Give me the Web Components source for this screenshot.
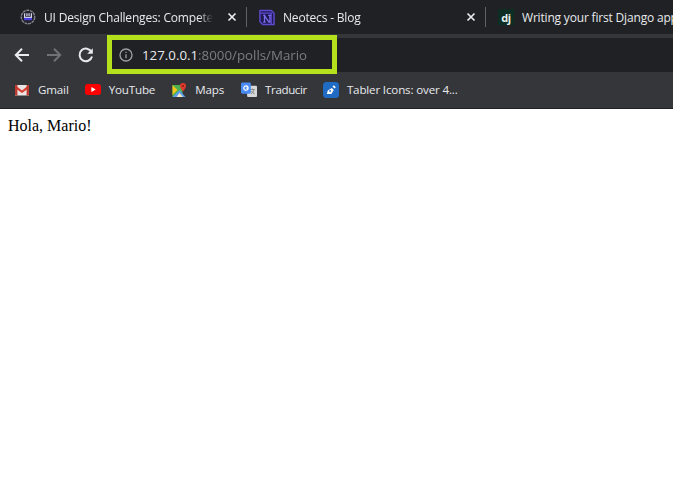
<!DOCTYPE html>
<html lang="es"><head><meta charset="utf-8"><title>127.0.0.1:8000/polls/Mario</title>
<style>
html,body{margin:0;padding:0;background:#fff;height:100%;overflow:hidden}
body{display:flex;flex-direction:column}
</style></head><body>
<tab-strip>
  <browser-tab label="UI Design Challenges: Compete" closable>
    <svg slot="icon" width="18" height="18" viewBox="0 0 18 18"><circle cx="9" cy="9" r="7.600" fill="#23242e" stroke="#85868e" stroke-width="1.500" stroke-dasharray="3.400 .8"/><path d="M5.200 4.800v4.700h7.600V4.800M7.800 4.800v3M10.200 4.800v3" fill="none" stroke="#dcdcf4" stroke-width="1.300"/><rect x="4.600" y="10" width="8.800" height="2.600" fill="#4a3fe0"/></svg>
  </browser-tab>
  <browser-tab label="Neotecs - Blog" closable>
    <svg slot="icon" width="17" height="17" viewBox="0 0 17 17"><path d="M1 1h12l3 3v12H4l-3-3z" fill="#1d1a52" stroke="#5f49d0" stroke-width="1.500" stroke-linejoin="round"/><path d="M1.500 3.800h11.500V16" fill="none" stroke="#5f49d0" stroke-width="1.300"/><path d="M5.800 13.500V6.500l4.800 7h1V6M4.500 6.200h2.200M9.800 6.200h2.900M4.500 13.500h2.600" fill="none" stroke="#7f70f2" stroke-width="1.300"/></svg>
  </browser-tab>
  <browser-tab label="Writing your first Django app" last>
    <span slot="icon" style="display:flex;align-items:center;justify-content:center;width:16px;height:16px;background:#0c2e23;color:#e6f0ec;font:700 11px 'Open Sans',sans-serif;letter-spacing:-.3px">dj</span>
  </browser-tab>
</tab-strip>
<nav-bar url-host="127.0.0.1" url-rest=":8000/polls/Mario"></nav-bar>
<bookmark-bar>
  <book-mark label="Gmail"><svg slot="icon" width="16" height="16" viewBox="0 0 16 16"><path d="M1 3h14v10.500H1z" fill="#e8e4e1"/><path d="M1 3l7 5.500L15 3v3L8 11 1 6z" fill="#d93b30"/><path d="M1 3h2.400v10.500H1.600L1 13zM15 3h-2.400v10.500h1.800l.6-.5z" fill="#bd3a30"/></svg></book-mark>
  <book-mark label="YouTube"><svg slot="icon" width="16" height="16" viewBox="0 0 16 16"><rect x="0" y="2" width="16" height="11" rx="3" fill="#f00"/><path d="M6.400 5v5l4.300-2.500z" fill="#fff"/></svg></book-mark>
  <book-mark label="Maps"><svg slot="icon" width="16" height="16" viewBox="0 0 16 16"><path d="M1.500 3h10v12h-10z" fill="#4caf50"/><path d="M1.500 15l7-7 6 7z" fill="#5c9ce6"/><path d="M1.500 3l5 5-5 5z" fill="#f5c518"/><path d="M5.500 15l3-4 3.500 4z" fill="#f5e9c9"/><path d="M12 1a3 3 0 0 0-3 3C9 6 12 9.500 12 9.500S15 6 15 4a3 3 0 0 0-3-3z" fill="#e0392d"/><circle cx="12" cy="4" r="1.100" fill="#8c1d15"/></svg></book-mark>
  <book-mark label="Traducir" style="margin-left:1px;letter-spacing:-.4px"><svg slot="icon" width="16" height="16" viewBox="0 0 17 16"><rect x="6.500" y="3.500" width="10.500" height="12" rx="1" fill="#d8d8d8"/><path d="M10 7.500h4.500M12.200 6.500v1M10.500 12c2-1 3-2.500 3.500-4.500M11 9c.8 1.500 2 2.500 3.500 3" fill="none" stroke="#7a7a7a" stroke-width=".9"/><rect x="0" y="0" width="10.500" height="12" rx="1.500" fill="#4a8af4"/><circle cx="5.200" cy="6" r="2.300" fill="none" stroke="#fff" stroke-width="1.300"/><path d="M5.500 6h2.200" stroke="#fff" stroke-width="1.100"/></svg></book-mark>
  <book-mark label="Tabler Icons: over 4..."><svg slot="icon" width="16" height="16" viewBox="0 0 16 16"><rect width="16" height="16" rx="3.500" fill="#206bc4"/><path d="M3.800 12l1-3.600 4-2.300 1.900 1.900-2.300 4z" fill="#fff"/><path d="M9.500 4.600l2 2L12.800 5.200 10.900 3.200z" fill="#fff"/><circle cx="7.100" cy="9" r=".9" fill="#206bc4"/></svg></book-mark>
</bookmark-bar>
<page-view>Hola, Mario!</page-view>
<script>
const def=(name,html,init)=>customElements.define(name,class extends HTMLElement{
  connectedCallback(){ if(this.shadowRoot)return; const r=this.attachShadow({mode:'open'}); r.innerHTML=html; if(init)init(this,r); }
});
const UI="'Open Sans','Noto Sans',sans-serif";
def('tab-strip',`<style>:host{display:flex;flex:none;height:34px;background:#202124;padding-left:8px;overflow:hidden}</style><slot></slot>`);
def('browser-tab',`<style>
:host{display:flex;flex:none;width:239px;height:34px;align-items:center;box-sizing:border-box;padding:0 0 0 12px;position:relative;color:#e8eaed;font:12px ${UI}}
.ic{width:16px;height:16px;flex:none;display:flex;align-items:center;justify-content:center}
.t{margin-left:8px;flex:1;min-width:0;white-space:nowrap;overflow:hidden;letter-spacing:-.18px}
:host([closable]) .t{-webkit-mask-image:linear-gradient(90deg,#000 calc(100% - 14px),transparent)}
.x{width:10px;height:10px;flex:none;margin:0 9px 0 14px;display:none}
:host([closable]) .x{display:block}
.sep{width:1px;height:20px;background:#5f6368;flex:none;display:none}
:host([closable]) .sep{display:block}
</style><span class="ic"><slot name="icon"></slot></span><span class="t"></span>
<svg class="x" viewBox="0 0 10 10"><path d="M1.500 1.500l7 7M8.500 1.500l-7 7" stroke="#e8eaed" stroke-width="1.700"/></svg><span class="sep"></span>`,
(h,r)=>{r.querySelector('.t').textContent=h.getAttribute('label')});
def('nav-bar',`<style>
:host{display:flex;flex:none;height:38px;background:#35363a;align-items:flex-start;position:relative;z-index:1}
.btns{flex:none;width:107px;height:38px;display:flex;align-items:center;padding:3px 0 0 12px;box-sizing:border-box;gap:12px}
svg.n{flex:none;display:block}
.omni{flex:1;height:34px;margin-top:4px;background:#202124;display:flex;align-items:center;position:relative;font:13.300px ${UI}}
.i{margin-left:12px;flex:none}
.u{margin-left:9px;color:#e8eaed;white-space:nowrap}
.u span{color:#9aa0a6;opacity:.72}
.mark{position:absolute;left:0;top:-3px;width:230px;height:39px;box-sizing:border-box;border:5px solid #b5e01c;pointer-events:none}
</style>
<div class="btns">
<svg class="n" width="20" height="20" viewBox="0 0 20 20"><path d="M17 10H4.500M10 3.800L3.800 10l6.200 6.200" fill="none" stroke="#e8eaed" stroke-width="2"/></svg>
<svg class="n" width="20" height="20" viewBox="0 0 20 20"><path d="M3 10h12.500M10 3.800l6.200 6.200-6.200 6.200" fill="none" stroke="#6f7276" stroke-width="2"/></svg>
<svg class="n" width="20" height="20" viewBox="0 0 20 20"><path d="M15.500 7A6.300 6.300 0 1 0 16 11.500" fill="none" stroke="#e8eaed" stroke-width="2"/><path d="M16.800 3.200v5.600h-5.600z" fill="#e8eaed"/></svg>
</div>
<div class="omni">
<svg class="i" width="14" height="14" viewBox="0 0 14 14"><circle cx="7" cy="7" r="6" fill="none" stroke="#9aa0a6" stroke-width="1.300"/><path d="M7 6.200v4M7 3.800v1.300" stroke="#9aa0a6" stroke-width="1.300"/></svg>
<span class="u"><b style="font-weight:400"></b><span></span></span>
<div class="mark"></div>
</div>`,(h,r)=>{r.querySelector('b').textContent=h.getAttribute('url-host');r.querySelector('.u span').textContent=h.getAttribute('url-rest')});
def('bookmark-bar',`<style>:host{display:flex;flex:none;height:37px;box-sizing:border-box;background:#35363a;border-bottom:1px solid #202124;align-items:center;padding-left:14px;gap:16px}</style><slot></slot>`);
def('book-mark',`<style>:host{display:flex;align-items:center;color:#e8eaed;font:11.600px ${UI};letter-spacing:-.16px;white-space:nowrap}
.ic{display:flex;flex:none;width:16px;margin-right:8px}.t{padding-bottom:2px}</style><span class="ic"><slot name="icon"></slot></span><span class="t"></span>`,
(h,r)=>{r.querySelector('.t').textContent=h.getAttribute('label')});
def('page-view',`<style>:host{display:block;flex:1;background:#fff;color:#000;padding:8px;font:16px 'Liberation Serif',serif}</style><slot></slot>`);
</script>
</body></html>
